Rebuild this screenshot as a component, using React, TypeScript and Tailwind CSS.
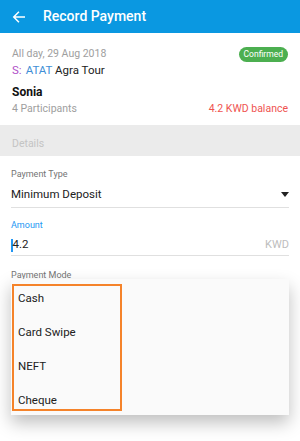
import React from 'react';

const modes = ['Cash', 'Card Swipe', 'NEFT', 'Cheque'];

const App = () => {
  return (
    <div className="relative w-[300px] h-[441px] overflow-hidden bg-white font-['Roboto',sans-serif]">
      <div className="h-[33px] bg-[#0a98e1] flex items-center px-[12px] text-white">
        <svg width="14" height="14" viewBox="0 0 24 24" fill="none" stroke="white" strokeWidth="2.6" strokeLinecap="square">
          <path d="M21 12H4M11 4l-8 8 8 8" />
        </svg>
        <span className="ml-[17px] text-[14px] font-medium">Record Payment</span>
      </div>

      <div className="px-[12px] pt-[13px] pb-[8px]">
        <div className="flex items-center justify-between h-[16px]">
          <span className="text-[10.5px] text-[#9e9e9e]">All day, 29 Aug 2018</span>
          <span className="h-[15px] px-[5px] rounded-full bg-[#4caf50] text-white text-[8.5px] flex items-center">Confirmed</span>
        </div>
        <div className="text-[11.5px] leading-[16px] text-[#212121]">
          <span className="text-[#b04fc8]">S:</span>
          <span className="ml-[4px] text-[#3f8fd6]">ATAT</span> Agra Tour
        </div>
        <div className="mt-[5px] text-[12px] leading-[18px] font-bold text-[#111]">Sonia</div>
        <div className="flex justify-between text-[10.5px] leading-[16px]">
          <span className="text-[#9e9e9e]">4 Participants</span>
          <span className="text-[#ef5350]">4.2 KWD balance</span>
        </div>
      </div>

      <div className="h-[31px] bg-[#ebebeb] px-[12px] pt-[12px] text-[10.5px] text-[#c4c4c4] leading-[14px]">Details</div>

      <div className="px-[11px]">
        <div className="pt-[12px] text-[9px] text-[#757575] leading-[12px]">Payment Type</div>
        <div className="flex items-center justify-between h-[28px] pt-[2px] border-b border-[#e0e0e0]">
          <span className="text-[11.5px] text-[#212121]">Minimum Deposit</span>
          <svg width="8" height="5" viewBox="0 0 8 5"><path d="M0 0h8L4 5z" fill="#222" /></svg>
        </div>
        <div className="pt-[11px] text-[9px] text-[#2196f3] leading-[12px]">Amount</div>
        <div className="flex items-center justify-between h-[25px] pt-[4px] border-b border-[#e0e0e0]">
          <span className="flex items-center text-[11.5px] text-[#212121]">
            <span className="w-[1.5px] h-[13px] bg-[#2196f3]" />4.2
          </span>
          <span className="text-[11px] text-[#bdbdbd]">KWD</span>
        </div>
        <div className="pt-[13px] text-[9px] text-[#757575] leading-[12px]">Payment Mode</div>
      </div>

      <div className="absolute left-[11px] top-[279px] w-[278px] h-[136px] bg-[#fafafa] shadow-[0_8px_16px_rgba(0,0,0,0.25)] pt-[5px] pl-[1px]">
        <div className="w-[110px] h-[127px] border-2 border-[#f5832a] flex flex-col">
          {modes.map((m) => (
            <div key={m} className="h-[34px] shrink-0 flex items-center pl-[4px] text-[11.5px] text-[#212121] first:mt-[-4px]">
              {m}
            </div>
          ))}
        </div>
      </div>
    </div>
  );
};

export default App;
